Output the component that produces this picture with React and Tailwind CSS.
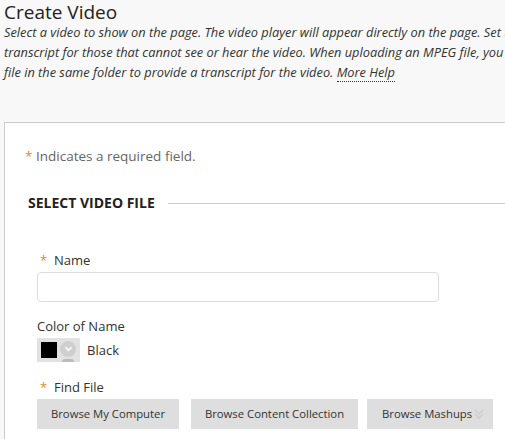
export default function App() {
  const font = { fontFamily: '"Open Sans", "Noto Sans", sans-serif' };
  return (
    <div className="w-[505px] h-[439px] overflow-hidden bg-[#f8f8f8] text-[#333]" style={font}>
      <div className="w-[900px] pl-[4px]">
        <h1 className="text-[19px] leading-[24px] text-[#222] font-normal">Create Video</h1>
        <div className="mt-[-2px] text-[12.8px] leading-[20px] italic text-[#333]">
          <div className="whitespace-nowrap">Select a video to show on the page. The video player will appear directly on the page. Set the Accessibility options to provide a</div>
          <div className="whitespace-nowrap">transcript for those that cannot see or hear the video. When uploading an MPEG file, you can place a SAMI</div>
          <div className="whitespace-nowrap">
            file in the same folder to provide a transcript for the video.{" "}
            <span className="border-b border-dotted border-[#333]">More Help</span>
          </div>
        </div>
        <div className="mt-[40px] bg-white border-t border-l border-[#ccc] h-[400px] pt-[24px]">
          <div className="pl-[20px] text-[13.5px] leading-[18px] text-[#666]">
            <span className="text-[#e0883c]">*</span> Indicates a required field.
          </div>
          <div className="mt-[29px] flex items-center pl-[23px]">
            <span className="text-[14px] font-bold text-[#222] leading-[18px]">SELECT VIDEO FILE</span>
            <div className="ml-[13px] w-[400px] h-px bg-[#ccc]"></div>
          </div>
          <div className="pl-[32px] mt-[39px]">
            <div className="flex items-center text-[13px] leading-[18px] text-[#333]">
              <span className="text-[#e0883c] w-[17px] pl-[3px]">*</span>
              <span>Name</span>
            </div>
            <div className="mt-[3px] w-[402px] h-[30px] border border-[#ddd] rounded-[4px] bg-white"></div>
            <div className="mt-[15px] text-[13px] leading-[18px]">Color of Name</div>
            <div className="mt-[3px] flex items-center">
              <div className="w-[43px] h-[24px] bg-[#e2e2e2] flex items-center pl-[4px] gap-[3px] overflow-hidden">
                <div className="w-[16px] h-[16px] bg-black"></div>
                <div className="relative w-[16px] h-[24px]">
                  <div className="absolute top-[3px] left-0 w-[16px] h-[16px] rounded-full bg-[#cfcfcf] flex items-center justify-center">
                    <svg width="9" height="6" viewBox="0 0 10 7">
                      <path d="M1.5 1.5 L5 5 L8.5 1.5" fill="none" stroke="#fff" strokeWidth="1.8" />
                    </svg>
                  </div>
                  <div className="absolute top-[21px] left-[2px] w-[12px] h-[6px] rounded-full bg-[#bbb]"></div>
                </div>
              </div>
              <span className="ml-[7px] text-[13px] leading-[18px]">Black</span>
            </div>
            <div className="mt-[16px] flex items-center text-[13px] leading-[18px] text-[#333]">
              <span className="text-[#e0883c] w-[17px] pl-[3px]">*</span>
              <span>Find File</span>
            </div>
            <div className="mt-[3px] flex text-[11.3px] text-[#333]">
              <div className="w-[142px] h-[30px] bg-[#dedede] flex items-center justify-center">Browse My Computer</div>
              <div className="ml-[12px] w-[167px] h-[30px] bg-[#dedede] flex items-center justify-center">Browse Content Collection</div>
              <div className="ml-[9px] w-[126px] h-[30px] bg-[#dedede] flex items-center pl-[15px]">
                <span>Browse Mashups</span>
                <svg width="12" height="12" viewBox="0 0 12 12" className="ml-[1px]">
                  <path d="M2 2 L6 6 L10 2 M2 6 L6 10 L10 6" fill="none" stroke="#ccc" strokeWidth="1.3" />
                </svg>
              </div>
            </div>
          </div>
        </div>
      </div>
    </div>
  );
}
